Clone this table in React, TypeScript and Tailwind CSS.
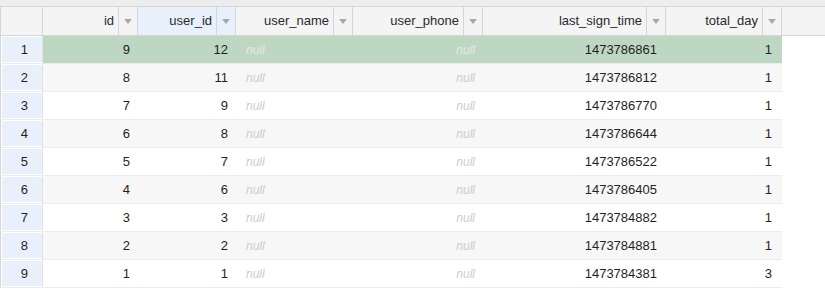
const columns = [
  { key: "id", label: "id", width: "w-[95px]" },
  { key: "user_id", label: "user_id", width: "w-[98px]", active: true },
  { key: "user_name", label: "user_name", width: "w-[117px]" },
  { key: "user_phone", label: "user_phone", width: "w-[130px]" },
  { key: "last_sign_time", label: "last_sign_time", width: "w-[183px]" },
  { key: "total_day", label: "total_day", width: "w-[116px]" },
];

const rows = [
  [9, 12, 1473786861, 1],
  [8, 11, 1473786812, 1],
  [7, 9, 1473786770, 1],
  [6, 8, 1473786644, 1],
  [5, 7, 1473786522, 1],
  [4, 6, 1473786405, 1],
  [3, 3, 1473784882, 1],
  [2, 2, 1473784881, 1],
  [1, 1, 1473784381, 3],
];

const Arrow = () => (
  <svg width="8" height="5" viewBox="0 0 8 5">
    <path d="M0 0 L8 0 L4 5 Z" fill="#a9a9a9" />
  </svg>
);

const Null = ({ selected }: { selected?: boolean }) => (
  <span className={`italic text-[12px] ${selected ? "text-[#e3ebe4]" : "text-[#cdcdcd]"}`}>null</span>
);

export default function App() {
  return (
    <div
      className="w-[825px] h-[297px] bg-white text-[13px] text-[#1f1f1f] overflow-hidden"
      style={{ fontFamily: '"Liberation Sans", Arial, sans-serif' }}
    >
      {/* top strip */}
      <div className="h-[7px] bg-[#ededed] border-b border-[#d6d6d6]" />

      {/* header */}
      <div className="flex h-[29px] bg-[#f4f4f4] border-b border-[#d6d6d6]">
        <div className="w-[43px] shrink-0 border-l border-r border-[#d6d6d6]" />
        {columns.map((c) => (
          <div
            key={c.key}
            className={`${c.width} shrink-0 flex border-r border-[#d6d6d6] ${
              c.active ? "bg-[#e8f1fb]" : ""
            }`}
          >
            <div className="flex-1 flex items-center justify-end pr-[4px] text-[#2a2a2a]">
              {c.label}
            </div>
            <div className="w-[19px] flex items-center justify-center border-l border-[#d6d6d6]">
              <Arrow />
            </div>
          </div>
        ))}
      </div>

      {/* body */}
      {rows.map((r, i) => {
        const selected = i === 0;
        const bg = selected ? "bg-[#bdd7c2]" : i % 2 === 1 ? "bg-[#f7f7f7]" : "bg-white";
        return (
          <div key={i} className="flex h-[28px] w-[782px] border-b border-[#ececec]">
            <div className="w-[43px] shrink-0 border-l border-[#d6d6d6] border-r border-r-[#e2e2e2] pl-[1px] py-[1px]">
              <div className="h-full bg-[#e8f1fb] flex items-center justify-end pr-[14px]">
                {i + 1}
              </div>
            </div>
            <div className={`flex flex-1 ${bg}`}>
              <div className="w-[95px] flex items-center justify-end pr-[8px]">{r[0]}</div>
              <div className="w-[98px] flex items-center justify-end pr-[8px]">{r[1]}</div>
              <div className="w-[117px] flex items-center pl-[10px]">
                <Null selected={selected} />
              </div>
              <div className="w-[130px] flex items-center justify-end pr-[8px]">
                <Null selected={selected} />
              </div>
              <div className="w-[183px] flex items-center justify-end pr-[9px]">{r[2]}</div>
              <div className="w-[116px] flex items-center justify-end pr-[10px]">{r[3]}</div>
            </div>
          </div>
        );
      })}
    </div>
  );
}
